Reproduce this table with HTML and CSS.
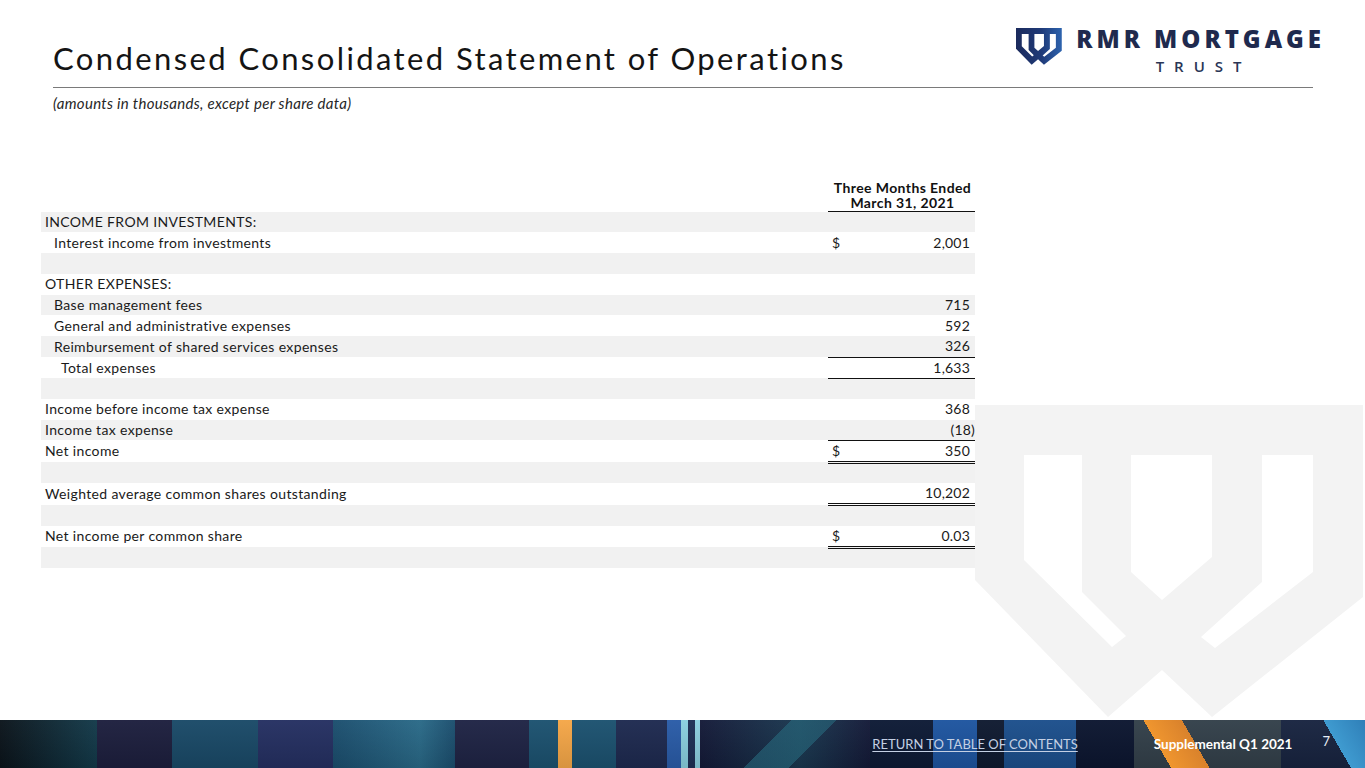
FILE: index.html
```html
<!DOCTYPE html>
<html lang="en">
<head>
<meta charset="utf-8">
<title>Condensed Consolidated Statement of Operations</title>
<link rel="stylesheet" href="styles.css">
</head>
<body>
<div class="slide">
  <svg class="watermark" viewBox="0 0 390 313" aria-hidden="true">
    <path fill-rule="evenodd" fill="#f3f3f3" d="M0 0H388V192L237 312L187 265L133 312L0 175Z M49 50H107V187L151 231L137 242L49 155Z M156 50H237V152L187 195L156 167Z M287 50H338V167L240 243L226 232L287 177Z"/>
  </svg>

  <header class="top">
    <h1 class="title">Condensed Consolidated Statement of Operations</h1>
    <div class="logo">
      <svg class="logo-mark" viewBox="0 0 390 313" aria-hidden="true">
        <defs>
          <linearGradient id="lg" x1="0" y1="0" x2="1" y2="0">
            <stop offset="0" stop-color="#1b2a5c"/>
            <stop offset="0.55" stop-color="#1f3a78"/>
            <stop offset="1" stop-color="#2d63ae"/>
          </linearGradient>
        </defs>
        <path fill-rule="evenodd" fill="url(#lg)" d="M0 0H388V192L237 312L187 265L133 312L0 175Z M49 50H107V187L151 231L137 242L49 155Z M156 50H237V152L187 195L156 167Z M287 50H338V167L240 243L226 232L287 177Z"/>
      </svg>
      <div class="logo-text">
        <div class="logo-name">RMR MORTGAGE</div>
        <div class="logo-sub">TRUST</div>
      </div>
    </div>
  </header>
  <div class="rule"></div>
  <p class="note">(amounts in thousands, except per share data)</p>

  <main class="content">
    <table class="fin">
      <colgroup>
        <col class="c-label"><col class="c-cur"><col class="c-num">
      </colgroup>
      <thead>
        <tr><th></th><th colspan="2" class="head">Three Months Ended<br>March 31, 2021</th></tr>
      </thead>
      <tbody>
        <tr><td class="lbl">INCOME FROM INVESTMENTS:</td><td></td><td></td></tr>
        <tr><td class="lbl sub">Interest income from investments</td><td class="cur">$</td><td class="num">2,001</td></tr>
        <tr><td class="lbl"></td><td></td><td></td></tr>
        <tr><td class="lbl">OTHER EXPENSES:</td><td></td><td></td></tr>
        <tr><td class="lbl sub">Base management fees</td><td></td><td class="num">715</td></tr>
        <tr><td class="lbl sub">General and administrative expenses</td><td></td><td class="num">592</td></tr>
        <tr class="single"><td class="lbl sub">Reimbursement of shared services expenses</td><td class="cur"></td><td class="num">326</td></tr>
        <tr class="single"><td class="lbl total">Total expenses</td><td class="cur"></td><td class="num">1,633</td></tr>
        <tr><td class="lbl"></td><td></td><td></td></tr>
        <tr><td class="lbl">Income before income tax expense</td><td></td><td class="num">368</td></tr>
        <tr class="single"><td class="lbl">Income tax expense</td><td class="cur"></td><td class="num neg">(18)</td></tr>
        <tr class="double"><td class="lbl">Net income</td><td class="cur">$</td><td class="num">350</td></tr>
        <tr><td class="lbl"></td><td></td><td></td></tr>
        <tr class="double"><td class="lbl">Weighted average common shares outstanding</td><td class="cur"></td><td class="num">10,202</td></tr>
        <tr><td class="lbl"></td><td></td><td></td></tr>
        <tr class="double"><td class="lbl">Net income per common share</td><td class="cur">$</td><td class="num">0.03</td></tr>
        <tr><td class="lbl"></td><td></td><td></td></tr>
      </tbody>
    </table>
  </main>

  <footer class="foot">
    <a class="toc" href="#">RETURN TO TABLE OF CONTENTS</a>
    <span class="supp">Supplemental Q1 2021</span>
    <span class="page">7</span>
  </footer>
</div>
</body>
</html>
```

FILE: styles.css
```css
* { box-sizing: border-box; }
html, body { margin: 0; padding: 0; background: #fff; }
body { font-family: Lato, "Noto Sans", sans-serif; color: #1a1a1a; }

.slide {
  position: relative;
  width: 1365px;
  height: 768px;
  overflow: hidden;
  display: flex;
  flex-direction: column;
  background: #fff;
}

.watermark {
  position: absolute;
  left: 975px;
  top: 405px;
  width: 390px;
  height: 313px;
  z-index: 0;
}

.top, .rule, .note, .content, .foot { position: relative; z-index: 1; }

.top {
  display: flex;
  justify-content: space-between;
  align-items: flex-start;
  height: 87px;
  padding: 0 40px 0 53px;
}
.title {
  margin: 40px 0 0 0;
  font-family: Lato, sans-serif;
  font-weight: 400;
  font-size: 31px;
  line-height: 36px;
  letter-spacing: 2.4px;
  color: #141414;
  white-space: nowrap;
}

.logo {
  display: flex;
  align-items: flex-start;
  margin-top: 28px;
  gap: 14px;
}
.logo-mark { width: 46px; height: 37px; display: block; }
.logo-text { display: flex; flex-direction: column; align-items: center; }
.logo-name {
  font-family: "Open Sans", sans-serif;
  font-weight: 800;
  font-size: 24px;
  line-height: 24px;
  letter-spacing: 4px;
  color: #1f2a4e;
  margin-top: -1px;
  white-space: nowrap;
}
.logo-sub {
  font-family: "Open Sans", sans-serif;
  font-weight: 600;
  font-size: 15px;
  line-height: 16px;
  letter-spacing: 10px;
  padding-left: 6px;
  color: #2a3656;
  margin-top: 7px;
}

.rule {
  height: 1px;
  background: #7a7a7a;
  margin: 0 52px 0 53px;
}

.note {
  margin: 6px 0 0 53px;
  font-style: italic;
  font-size: 15px;
  line-height: 18px;
  letter-spacing: 0.3px;
  color: #262626;
}

.content {
  flex: 1;
  padding: 68px 0 0 41px;
}

.fin {
  border-collapse: collapse;
  width: 934px;
  font-size: 14px;
  letter-spacing: 0.35px;
  color: #1a1a1a;
}
.c-label { width: 787px; }
.c-cur { width: 17px; }
.c-num { width: 130px; }

.fin .head {
  font-weight: 700;
  font-size: 14px;
  line-height: 15px;
  letter-spacing: 0.4px;
  text-align: center;
  padding: 0 0 1px 2px;
  border-bottom: 1.5px solid #111;
  color: #111;
}
.fin td {
  height: 20.8px;
  padding: 0;
  line-height: 20px;
  white-space: nowrap;
}
.fin tbody tr:nth-child(odd) { background: #f1f1f1; }
.lbl { padding-left: 4px !important; }
.lbl.sub { padding-left: 13px !important; }
.lbl.total { padding-left: 20px !important; }
.cur { padding-left: 4px !important; }
.num { text-align: right; padding-right: 5px !important; letter-spacing: 0.2px; }
.num.neg { padding-right: 0 !important; }

.fin tr.single td.cur, .fin tr.single td.num { border-bottom: 1.5px solid #111; }
.fin tr.double td.cur, .fin tr.double td.num { border-bottom: 3.5px double #111; }

.foot {
  height: 48px;
  flex: none;
  display: flex;
  align-items: center;
  justify-content: flex-end;
  padding-right: 35px;
  background:
    linear-gradient(60deg, transparent 0 38%, #f0962f 38%, #d9822c 64%, transparent 64%) 1115px 0 / 120px 48px no-repeat,
    linear-gradient(60deg, transparent 0 55%, #3f9bd0 55%, #2f7fb8 100%) 1300px 0 / 65px 48px no-repeat,
    linear-gradient(135deg, transparent 0 40%, rgba(40,110,130,0.55) 40%, rgba(40,110,130,0.55) 60%, transparent 60%) 700px 0 / 180px 48px no-repeat,
    linear-gradient(to bottom, rgba(255,255,255,0.03), rgba(0,0,0,0.12)),
    linear-gradient(to right,
      #0b141b 0px, #133a4a 97px,
      #1d1f3e 97px, #1d1f3e 172px,
      #1a4a68 172px, #1a4a68 258px,
      #253062 258px, #253062 333px,
      #1b4e6e 333px, #2a6a88 420px, #1b4e6e 455px,
      #1f2445 455px, #1f2445 529px,
      #1c5270 529px, #1c5270 558px,
      #f5a748 558px, #f5a748 572px,
      #1c5270 572px, #1c5270 616px,
      #1e2a50 616px, #1e2a50 667px,
      #2a5ca8 667px, #2a5ca8 681px,
      #8ad0e0 681px, #8ad0e0 688px,
      #1d2f55 688px, #1d2f55 695px,
      #8ccfe0 695px, #8ccfe0 700px,
      #141a38 700px, #1a3850 800px, #141a38 870px,
      #0d1a35 870px, #0d1a35 933px,
      #1e55a0 933px, #1e55a0 977px,
      #0f1a30 977px, #0f1a30 1004px,
      #1c4f8c 1004px, #1c4f8c 1076px,
      #0c1630 1076px, #0c1630 1134px,
      #33404a 1134px, #33404a 1281px,
      #182440 1281px, #182440 1365px);
}
.toc {
  font-size: 13px;
  color: #c4d0e4;
  text-decoration: underline;
  text-underline-offset: 2px;
}
.supp {
  margin-left: 76px;
  font-weight: 700;
  font-size: 13.5px;
  color: #ffffff;
}
.page {
  margin-left: 30px;
  font-size: 13px;
  color: #e8eef6;
  position: relative;
  top: -3px;
}
```
